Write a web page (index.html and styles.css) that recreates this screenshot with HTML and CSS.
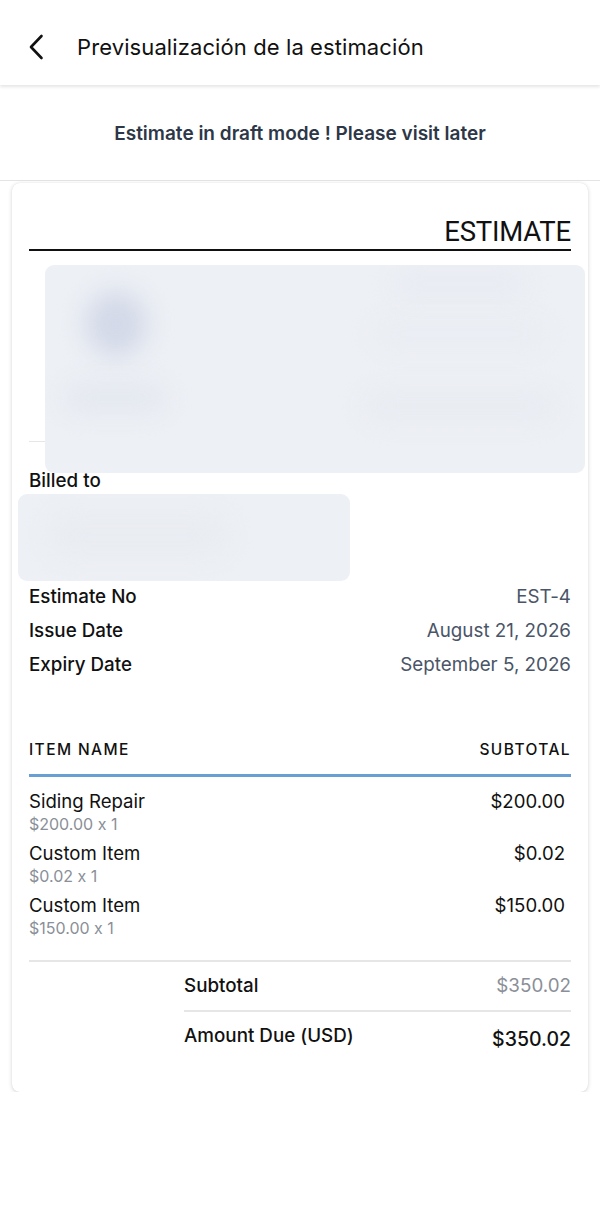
FILE: index.html
```html
<!DOCTYPE html>
<html lang="es">
<head>
<meta charset="utf-8">
<title>Previsualización de la estimación</title>
<link rel="stylesheet" href="styles.css">
</head>
<body>
<header class="topbar">
  <svg class="back" width="24" height="28" viewBox="0 0 24 28" aria-hidden="true">
    <path d="M15.5 3 L5 14 L15.5 25" fill="none" stroke="#111" stroke-width="2.6" stroke-linecap="round" stroke-linejoin="round"/>
  </svg>
  <h1 class="title">Previsualización de la estimación</h1>
</header>

<div class="banner">Estimate in draft mode ! Please visit later</div>

<main class="card">
  <div class="doc-title">ESTIMATE</div>

  <section class="company">
    <div class="redact redact-company">
      <span class="blob blob-logo"></span>
      <span class="blob blob-name"></span>
      <span class="blob blob-r1"></span>
      <span class="blob blob-r2"></span>
      <span class="blob blob-r3"></span>
    </div>
  </section>

  <div class="billed-label">Billed to</div>
  <div class="redact redact-billed">
    <span class="blob blob-b1"></span>
  </div>

  <div class="meta">
    <div class="meta-row"><span class="meta-k">Estimate No</span><span class="meta-v">EST-4</span></div>
    <div class="meta-row"><span class="meta-k">Issue Date</span><span class="meta-v">August 21, 2026</span></div>
    <div class="meta-row"><span class="meta-k">Expiry Date</span><span class="meta-v">September 5, 2026</span></div>
  </div>

  <div class="items-head"><span>ITEM NAME</span><span>SUBTOTAL</span></div>

  <div class="items">
    <div class="item">
      <div class="item-info"><div class="item-name">Siding Repair</div><div class="item-sub">$200.00 x 1</div></div>
      <div class="item-price">$200.00</div>
    </div>
    <div class="item">
      <div class="item-info"><div class="item-name">Custom Item</div><div class="item-sub">$0.02 x 1</div></div>
      <div class="item-price">$0.02</div>
    </div>
    <div class="item">
      <div class="item-info"><div class="item-name">Custom Item</div><div class="item-sub">$150.00 x 1</div></div>
      <div class="item-price">$150.00</div>
    </div>
  </div>

  <div class="totals">
    <div class="total-row subtotal"><span class="total-k">Subtotal</span><span class="total-v">$350.02</span></div>
    <div class="total-row due"><span class="total-k">Amount Due (USD)</span><span class="total-v">$350.02</span></div>
  </div>
</main>
</body>
</html>
```

FILE: styles.css
```css
* { box-sizing: border-box; }

html, body {
  margin: 0;
  padding: 0;
  background: #ffffff;
  font-family: Inter, "Noto Sans", "Liberation Sans", sans-serif;
  font-feature-settings: "calt" 0;
  color: #111111;
}

.topbar {
  height: 85px;
  display: flex;
  align-items: center;
  padding-left: 26px;
  padding-top: 8px;
  background: #fff;
  box-shadow: 0 2px 3px rgba(0, 0, 0, 0.10);
  position: relative;
  z-index: 1;
}

.back {
  display: block;
}

.title {
  margin: 0 0 0 27px;
  font-size: 22px;
  font-weight: 400;
  color: #111;
  letter-spacing: 0.1px;
}

.banner {
  height: 96px;
  display: flex;
  align-items: center;
  justify-content: center;
  font-size: 19px;
  font-weight: 600;
  color: #2d3748;
  border-bottom: 1px solid #e4e4e4;
  padding-top: 1px;
}

.card {
  margin: 2px 12px 0;
  border-radius: 8px;
  background: #fff;
  box-shadow: 0 1px 4px rgba(0, 0, 0, 0.16), 0 0 1px rgba(0, 0, 0, 0.10);
  padding: 32px 17px 41px;
}

.doc-title {
  text-align: right;
  font-size: 27.5px;
  line-height: 34px;
  font-weight: 400;
  letter-spacing: -0.2px;
  border-bottom: 2px solid #111;
  font-family: Roboto, Inter, sans-serif;
}

.company {
  position: relative;
  margin-top: 14px;
  height: 177px;
  border-bottom: 1px solid #e6e6e6;
}

.redact {
  background: #edf0f5;
  border-radius: 9px;
  overflow: hidden;
}

.redact-company {
  position: absolute;
  left: 16px;
  top: 0;
  width: 540px;
  height: 208px;
}

.blob {
  position: absolute;
  display: block;
  border-radius: 50%;
  filter: blur(12px);
}

.blob-logo { left: 40px; top: 26px; width: 62px; height: 66px; background: #d3d9e8; }
.blob-name { left: 20px; top: 120px; width: 100px; height: 26px; background: #e3e7ef; border-radius: 13px; }
.blob-r1 { left: 350px; top: 8px; width: 130px; height: 22px; background: #e7eaf1; border-radius: 11px; }
.blob-r2 { left: 330px; top: 58px; width: 170px; height: 22px; background: #e9ecf2; border-radius: 11px; }
.blob-r3 { left: 320px; top: 128px; width: 190px; height: 26px; background: #e8ebf1; border-radius: 13px; }

.billed-label {
  margin-top: 27px;
  font-size: 18.8px;
  line-height: 24px;
  font-weight: 500;
}

.redact-billed {
  position: relative;
  margin: 1px 0 0 -11px;
  width: 332px;
  height: 87px;
}

.blob-b1 { left: 30px; top: 20px; width: 180px; height: 42px; background: #e9ecf1; border-radius: 21px; }

.meta {
  margin-top: -2px;
}

.meta-row {
  display: flex;
  justify-content: space-between;
  align-items: center;
  height: 34px;
  font-size: 18.8px;
}

.meta-k { font-weight: 500; color: #111; }
.meta-v { color: #4a5568; }

.items-head {
  margin-top: 59px;
  display: flex;
  justify-content: space-between;
  font-size: 15.5px;
  line-height: 20px;
  font-weight: 500;
  letter-spacing: 1.4px;
  padding-bottom: 14px;
  border-bottom: 3px solid #6a9fd3;
}

.items {
  padding-top: 12px;
  padding-bottom: 15px;
  border-bottom: 2px solid #e6e6e6;
}

.item {
  display: flex;
  justify-content: space-between;
  align-items: flex-start;
  margin-bottom: 6px;
}

.item-name {
  font-size: 18.6px;
  line-height: 24px;
}

.item-sub {
  font-size: 16px;
  line-height: 22px;
  color: #8a8f98;
}

.item-price {
  font-size: 18.6px;
  line-height: 24px;
  padding-right: 6px;
}

.totals {
  margin-left: 155px;
}

.total-row {
  display: flex;
  justify-content: space-between;
  align-items: center;
  font-size: 18.8px;
}

.subtotal {
  padding: 12px 0 12px;
  line-height: 24px;
  border-bottom: 2px solid #e6e6e6;
}

.subtotal .total-k { font-weight: 500; }
.subtotal .total-v { color: #8a8f98; }

.due {
  padding-top: 12px;
  line-height: 24px;
  align-items: flex-start;
}

.due .total-k { font-weight: 500; }
.due .total-v { font-size: 19.5px; font-weight: 500; padding-top: 3px; }
```
